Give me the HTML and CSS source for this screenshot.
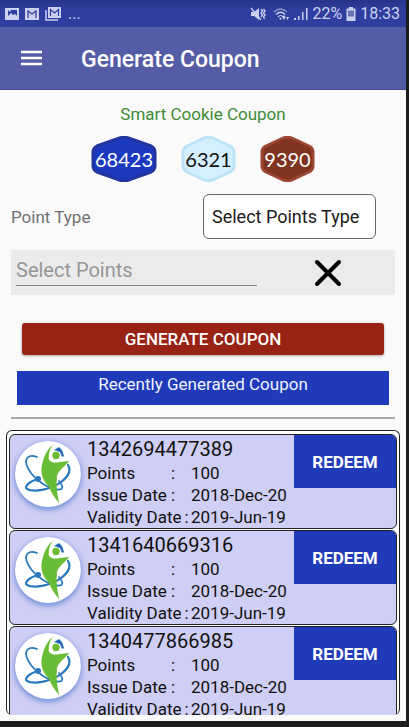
FILE: index.html
```html
<!DOCTYPE html>
<html lang="en">
<head>
<meta charset="utf-8">
<meta name="viewport" content="width=device-width, initial-scale=1">
<title>Generate Coupon</title>
<link rel="stylesheet" href="styles.css">
</head>
<body>
<svg class="defs" aria-hidden="true">
  <symbol id="logo" viewBox="0 0 66 66">
    <circle cx="33" cy="33" r="33" fill="#fff"/>
    <g fill="none" stroke="#2a78bd" stroke-linecap="round">
      <path stroke-width="1.8" d="M22 16C14 13 9 17 12 25C16 35 28 45 39 48C49 50 49 46 44 40"/>
      <path stroke-width="2.2" d="M23 38C13 41 9 46 12 48C19 52 37 48 46 41C54 35 56 29 53 24"/>
    </g>
    <path fill="#67bd35" d="M39 3C35 7 33 13 34 19C39 24 47 20 54 20C51 25 44 28 42 35C41 43 42 53 44 62C39 56 36 51 34 46C28 40 25 32 27 24C29 14 33 7 39 3Z"/>
    <circle cx="41" cy="14.500" r="3.700" fill="#67bd35"/>
    <path fill="#1f66b5" d="M39 9L44 6L47 9L49 15L47 16L45 11Z"/>
    <circle cx="23" cy="38" r="3" fill="#2a78bd"/>
  </symbol>
</svg>
<div class="screen">
  <div class="status">
    <div class="status-group">
      <svg width="14" height="14" viewBox="0 0 14 14"><path fill="currentColor" fill-rule="evenodd" d="M0 1h14v12H0zM3 9l3-3 2 2 2-1 2 2V3H6l-1 2-2-2z"/></svg>
      <svg width="14" height="12" viewBox="0 0 14 12"><path fill="currentColor" d="M0 0h14v12H0z"/><path fill="none" stroke="#2c3a9c" stroke-width="1.200" d="M3 10V3L7 6l4-3v7"/></svg>
      <svg width="17" height="14" viewBox="0 0 17 14"><path fill="none" stroke="currentColor" stroke-width="1.500" d="M1 3v10h12"/><path fill="currentColor" d="M3 0H16v11H3z"/><path fill="none" stroke="#2c3a9c" stroke-width="1.200" d="M5.500 9V2.500L9.500 6l4-3.500V9"/></svg>
      <span>...</span>
    </div>
    <div class="status-group status-right">
      <svg width="16" height="14" viewBox="0 0 16 14"><path fill="currentColor" d="M1 5h3l5-4v12L4 9H1z"/><path fill="none" stroke="currentColor" stroke-width="1.300" d="M1 1l10 12M11 2l1.500 2-1.500 2 1.500 2-1.500 2M13.500 2L15 4l-1.500 2L15 8l-1.500 2 1 2"/></svg>
      <svg class="wifi" width="17" height="14" viewBox="0 0 17 14"><g fill="none" stroke="currentColor" stroke-width="1.200"><path opacity=".6" d="M1 5q6.500-6 13 0"/><path d="M3 7.500q4.500-4.500 9 0M5 10q2.500-3 5 0"/></g><path fill="currentColor" d="M6 11h3l-1.500 2zM9.500 10l1.500-2 1.500 2-1.500 3zM13 10h3l-1.500 3z"/></svg>
      <svg width="14" height="14" viewBox="0 0 14 14"><path fill="currentColor" d="M0 11h2v2H0zM4 9h1.500v4H4zM8 5h1.500v8H8zM12 1h1.500v12H12z"/></svg>
      <span>22%</span>
      <svg width="10" height="14" viewBox="0 0 10 14"><path fill="currentColor" d="M3 0h4v2H3zM.5 1.500h9V14h-9z"/><path fill="#6b73b8" d="M2 3.500h6v6H2z"/></svg>
      <span>18:33</span>
    </div>
  </div>

  <header class="appbar">
    <button class="menu" type="button" aria-label="Open menu">
      <svg width="22" height="18" viewBox="0 0 22 18"><path stroke="#fff" stroke-width="2.500" d="M0 3h21M0 9h21M0 15h21"/></svg>
    </button>
    <h1>Generate Coupon</h1>
  </header>

  <main>
    <h2>Smart Cookie Coupon</h2>
    <div class="badges">
      <div class="badge badge-blue">
        <svg width="66" height="46" viewBox="0 0 66 46"><path d="M27 2.500Q33 0 39 2.500L60 10Q64 12 64 16V30Q64 34 60 36L39 43.500Q33 46 27 43.500L6 36Q2 34 2 30V16Q2 12 6 10Z"/></svg>
        <span>68423</span>
      </div>
      <div class="badge badge-sky">
        <svg width="55" height="46" viewBox="0 0 55 46"><path d="M22 2.500Q27.500 0 33 2.500L49 10Q53 12 53 16V30Q53 34 49 36L33 43.500Q27.500 46 22 43.500L6 36Q2 34 2 30V16Q2 12 6 10Z"/></svg>
        <span>6321</span>
      </div>
      <div class="badge badge-brown">
        <svg width="55" height="46" viewBox="0 0 55 46"><path d="M22 2.500Q27.500 0 33 2.500L49 10Q53 12 53 16V30Q53 34 49 36L33 43.500Q27.500 46 22 43.500L6 36Q2 34 2 30V16Q2 12 6 10Z"/></svg>
        <span>9390</span>
      </div>
    </div>

    <form class="form">
      <div class="type-row">
        <label for="type">Point Type</label>
        <select id="type"><option>Select Points Type</option></select>
      </div>
      <div class="points-row">
        <input type="text" placeholder="Select Points" aria-label="Select Points">
        <button class="clear" type="button" aria-label="Clear points">
          <svg width="28" height="28" viewBox="0 0 28 28"><path stroke="#000" stroke-width="4" stroke-linecap="round" d="M3 3l22 22M25 3L3 25"/></svg>
        </button>
      </div>
      <button class="generate" type="button">GENERATE COUPON</button>
    </form>

    <h3>Recently Generated Coupon</h3>
    <hr>

    <div class="list">
      <article class="card">
        <svg class="logo" aria-hidden="true"><use href="#logo"/></svg>
        <div class="info">
          <h4>1342694477389</h4>
          <dl>
            <dt><span>Points</span>:</dt><dd>100</dd>
            <dt><span>Issue Date</span>:</dt><dd>2018-Dec-20</dd>
            <dt><span>Validity Date</span>:</dt><dd>2019-Jun-19</dd>
          </dl>
        </div>
        <button class="redeem" type="button">REDEEM</button>
      </article>
      <article class="card">
        <svg class="logo" aria-hidden="true"><use href="#logo"/></svg>
        <div class="info">
          <h4>1341640669316</h4>
          <dl>
            <dt><span>Points</span>:</dt><dd>100</dd>
            <dt><span>Issue Date</span>:</dt><dd>2018-Dec-20</dd>
            <dt><span>Validity Date</span>:</dt><dd>2019-Jun-19</dd>
          </dl>
        </div>
        <button class="redeem" type="button">REDEEM</button>
      </article>
      <article class="card">
        <svg class="logo" aria-hidden="true"><use href="#logo"/></svg>
        <div class="info">
          <h4>1340477866985</h4>
          <dl>
            <dt><span>Points</span>:</dt><dd>100</dd>
            <dt><span>Issue Date</span>:</dt><dd>2018-Dec-20</dd>
            <dt><span>Validity Date</span>:</dt><dd>2019-Jun-19</dd>
          </dl>
        </div>
        <button class="redeem" type="button">REDEEM</button>
      </article>
    </div>
  </main>
</div>
</body>
</html>
```
FILE: styles.css
```css
* {
  box-sizing: border-box;
}

body {
  margin: 0;
  height: 100vh;
  padding: 0 3px 6px 0;
  background: #1c1e1e;
  font-family: Roboto, "Liberation Sans", sans-serif;
  color: #111;
}

h1, h2, h3, h4, dl, dd {
  margin: 0;
  font-weight: 400;
}

button, input, select {
  font: inherit;
  border: 0;
  padding: 0;
  margin: 0;
}

.defs {
  position: absolute;
  width: 0;
  height: 0;
}

.screen {
  display: flex;
  flex-direction: column;
  height: 100%;
  background: #fafafa;
}

.status {
  display: flex;
  justify-content: space-between;
  align-items: center;
  height: 27px;
  padding: 0 6px 0 5px;
  background: linear-gradient(#28348a, #303f9f 40%);
  color: #ccd0ee;
  font-size: 16px;
}

.status-group {
  display: flex;
  align-items: center;
  gap: 6px;
}

.status-right {
  gap: 4px;
}

.wifi {
  margin-left: 3px;
}

.appbar {
  display: flex;
  align-items: center;
  gap: 38px;
  height: 63px;
  padding: 0 21px;
  background: #545ca6;
  border-bottom: 1px solid #444c98;
  color: #fff;
}

.menu {
  display: flex;
  background: none;
}

.appbar h1 {
  padding-top: 3px;
  font-size: 23px;
  font-weight: 500;
}

main {
  display: flex;
  flex-direction: column;
  flex: 1;
  min-height: 0;
  padding: 12px 6px 6px;
}

h2 {
  font-size: 17px;
  line-height: 24px;
  text-align: center;
  color: #3e8b36;
}

.badges {
  display: flex;
  justify-content: center;
  gap: 24px;
  margin-top: 10px;
}

.badge {
  display: grid;
  place-items: center;
  height: 46px;
  font: 20px Lato, sans-serif;
}

.badge > * {
  grid-area: 1 / 1;
}

.badge svg {
  stroke-width: 3;
}

.badge-blue { color: #fff; }
.badge-blue svg { fill: #1b3abf; stroke: #2234a0; }
.badge-sky { color: #111; }
.badge-sky svg { fill: #d4efff; stroke: #bde3f8; }
.badge-brown { color: #fff; }
.badge-brown svg { fill: #80331f; stroke: #9c4632; }

.form {
  padding: 12px 5px 0;
}

.type-row {
  display: grid;
  grid-template-columns: 1fr 1fr;
  align-items: center;
  font-size: 17px;
  color: #707070;
}

.type-row select {
  appearance: none;
  width: 173px;
  height: 45px;
  padding: 0 8px;
  border: 1px solid #666;
  border-radius: 6px;
  background: #fff;
  color: #1a1a1a;
  font-size: 18px;
}

.points-row {
  display: flex;
  align-items: center;
  height: 45px;
  margin-top: 11px;
  padding: 0 53px 0 5px;
  background: #ebebeb;
}

.points-row input {
  flex: 1;
  min-width: 0;
  height: 28px;
  margin: 0 57px 2px 0;
  padding-bottom: 3px;
  border-bottom: 1px solid #888;
  background: none;
  font-size: 20px;
}

.points-row input::placeholder {
  color: #969696;
}

.clear {
  display: flex;
  background: none;
}

.generate {
  display: block;
  width: calc(100% - 22px);
  height: 32px;
  margin: 28px 11px 0;
  border-radius: 3px;
  background: #982214;
  box-shadow: 0 1px 3px #0005;
  color: #fff;
  font-size: 17px;
  font-weight: 500;
}

h3 {
  height: 34px;
  margin: 16px 11px 0;
  background: #203bb9;
  color: #f0f2ff;
  font-size: 17px;
  line-height: 26px;
  text-align: center;
}

hr {
  width: calc(100% - 10px);
  height: 2px;
  margin: 12px 5px 0;
  border: 0;
  background: #aaa;
}

.list {
  flex: 1;
  min-height: 0;
  margin-top: 11px;
  padding: 3px 2px;
  overflow: hidden;
  border: 1px solid #222;
  border-bottom: 0;
  border-radius: 6px;
  background: #fff;
}

.card {
  display: flex;
  align-items: flex-start;
  margin-bottom: 1px;
  overflow: hidden;
  border: 1px solid #222;
  border-radius: 6px;
  background: #cfcef5;
}

.logo {
  flex: none;
  width: 66px;
  height: 66px;
  margin: 6px 6px 0 5px;
  border-radius: 50%;
  box-shadow: 0 2px 6px #5b82d8;
}

.info {
  flex: 1;
  padding-top: 2px;
}

h4 {
  font-size: 20px;
  line-height: 25px;
}

dl {
  display: grid;
  grid-template-columns: 104px 1fr;
  font-size: 17px;
  line-height: 22px;
  white-space: nowrap;
}

dt {
  display: flex;
}

dt span {
  min-width: 84px;
  padding-right: 3px;
}

.redeem {
  width: 102px;
  height: 53px;
  background: #203bb9;
  color: #fff;
  font-size: 17px;
  font-weight: 700;
}
```
